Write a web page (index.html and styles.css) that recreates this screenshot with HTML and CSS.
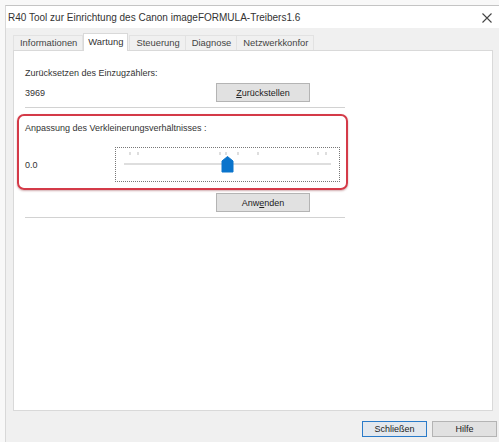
FILE: index.html
```html
<!DOCTYPE html>
<html lang="de">

<head>
    <meta charset="UTF-8">
    <meta name="viewport" content="width=device-width, initial-scale=1.0">
    <link rel="stylesheet" href="styles.css">
    <title>R40 Tool zur Einrichtung des Canon imageFORMULA-Treibers1.6</title>
</head>

<body>
    <div class="window">
        <div class="titlebar">
            <span class="title">R40 Tool zur Einrichtung des Canon imageFORMULA-Treibers1.6</span>
            <svg class="close" width="10" height="10" viewBox="0 0 10 10">
                <path d="M0.5 0.5 L9.5 9.5 M9.5 0.5 L0.5 9.5" stroke="#444" stroke-width="1.1" fill="none" />
            </svg>
        </div>

        <div class="client">
            <div class="tabs">
                <div class="tab">Informationen</div>
                <div class="tab active">Wartung</div>
                <div class="tab">Steuerung</div>
                <div class="tab">Diagnose</div>
                <div class="tab">Netzwerkkonfor</div>
            </div>

            <div class="panel">
                <div class="label">Zurücksetzen des Einzugzählers:</div>
                <div class="row">
                    <span class="value">3969</span>
                    <button class="btn"><u>Z</u>urückstellen</button>
                </div>
                <div class="sep"></div>

                <!-- Verkleinerung -->
                <div class="group">
                    <div class="label">Anpassung des Verkleinerungsverhältnisses :</div>
                    <div class="slider-row">
                        <span class="value">0.0</span>
                        <div class="slider">
                            <svg width="223" height="33" viewBox="0 0 223 33">
                                <g stroke="#bdbdbd" stroke-width="1">
                                    <path d="M14 4 V7 M22 4 V7 M104 4 V7 M110 4 V7 M122 4 V7 M142 4 V7 M202 4 V7 M210 4 V7" />
                                </g>
                                <rect x="8" y="15" width="207" height="2" fill="#dedede" />
                                <path d="M106 13 L111.5 8.5 L117 13 V24 H106 Z" fill="#0a74cc" stroke="#0a74cc"
                                    stroke-linejoin="round" />
                            </svg>
                        </div>
                    </div>
                </div>

                <div class="row">
                    <span></span>
                    <button class="btn">Anw<u>e</u>nden</button>
                </div>
                <div class="sep"></div>
            </div>

            <div class="footer">
                <button class="btn default">Schließen</button>
                <button class="btn">Hilfe</button>
            </div>
        </div>
    </div>
</body>

</html>
```

FILE: styles.css
```css
* {
    box-sizing: border-box;
}

body {
    margin: 0;
    width: 499px;
    height: 442px;
    overflow: hidden;
    background-color: #f8f8f8;
    font-family: "Liberation Sans", Arial, sans-serif;
    font-size: 9px;
    color: #333;
}

.window {
    margin: 5px 0 0 5px;
    border-top: 1px solid #c4c4c4;
    border-left: 1px solid #d8d8d8;
    height: 437px;
    background-color: #f0f0f0;
}

.titlebar {
    height: 22px;
    background-color: #fff;
    display: flex;
    align-items: center;
    justify-content: space-between;
    padding: 0 7px 0 2px;
}

.title {
    font-size: 10px;
    color: #333;
}

.close {
    display: block;
    margin-top: 2px;
}

.client {
    padding: 0 2px 0 7px;
}

/* tab strip */
.tabs {
    display: flex;
    align-items: flex-end;
    height: 22px;
    font-size: 9.4px;
}

.tab {
    height: 15px;
    line-height: 13px;
    padding: 0 5px 0 6px;
    border: 1px solid #e2e2e2;
    border-bottom: none;
    margin-right: -1px;
    background-color: #f0f0f0;
    color: #444;
}

.tab.active {
    height: 18px;
    line-height: 15px;
    padding: 0 4px;
    background-color: #fff;
    border-color: #d9d9d9;
    position: relative;
    z-index: 1;
    margin-bottom: -1px;
    margin-left: 1px;
    margin-right: 1px;
    color: #333;
}

.panel {
    height: 361px;
    margin-right: 4px;
    background-color: #fff;
    border: 1px solid #d9d9d9;
    padding: 15px 0 0 11px;
}

.label {
    line-height: 14px;
}

.row {
    display: grid;
    grid-template-columns: 191px 94px;
    align-items: center;
    margin-top: 3px;
}

.btn {
    height: 19px;
    padding: 0;
    font-family: inherit;
    font-size: 9px;
    color: #222;
    background-color: #e1e1e1;
    border: 1px solid #b4b4b4;
}

.btn u {
    text-decoration-thickness: 1px;
}

.sep {
    width: 320px;
    height: 1px;
    margin-top: 5px;
    background-color: #d2d2d2;
}

/* red marker around the slider group */
.group {
    width: 331px;
    margin: 6px 0 0 -8px;
    padding: 5px 6px 6px 6px;
    border: 2px solid #d43a48;
    border-radius: 7px;
    box-shadow: 0 1px 2px rgba(120, 20, 30, 0.35);
}

.slider-row {
    display: grid;
    grid-template-columns: 90px 225px;
    align-items: center;
    margin-top: 12px;
}

.slider {
    width: 225px;
    height: 35px;
    border: 1px dotted #777;
}

.slider svg {
    display: block;
}

.footer {
    display: flex;
    justify-content: flex-end;
    gap: 5px;
    margin-top: 10px;
}

.footer .btn {
    width: 65px;
    height: 16px;
}

.footer .btn.default {
    border-color: #2a7bc9;
    background-color: #e3e8ee;
}
```
